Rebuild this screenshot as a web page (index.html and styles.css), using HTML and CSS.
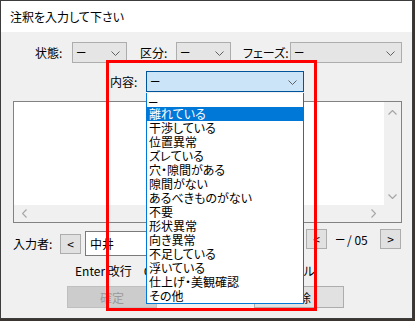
FILE: index.html
```html
<!DOCTYPE html>
<html lang="ja">

<head>
    <meta charset="UTF-8">
    <title>注釈を入力して下さい</title>
    <link rel="stylesheet" href="styles.css">
</head>

<body>
    <div class="window">
        <div class="titlebar">注釈を入力して下さい</div>

        <div class="filters">
            <span class="lbl lbl-state">状態:</span>
            <div class="combo combo-state"><span class="dash">–</span><svg class="chev" width="9" height="5" viewBox="0 0 9 5"><path d="M0.5 0.5 L4.5 4.5 L8.5 0.5" /></svg></div>
            <span class="lbl lbl-kind">区分:</span>
            <div class="combo combo-kind"><span class="dash">–</span><svg class="chev" width="9" height="5" viewBox="0 0 9 5"><path d="M0.5 0.5 L4.5 4.5 L8.5 0.5" /></svg></div>
            <span class="lbl lbl-phase">フェーズ:</span>
            <div class="combo combo-phase"><span class="dash">–</span><svg class="chev" width="9" height="5" viewBox="0 0 9 5"><path d="M0.5 0.5 L4.5 4.5 L8.5 0.5" /></svg></div>
        </div>

        <div class="content-row">
            <span class="lbl lbl-content">内容:</span>
            <div class="combo combo-content focused"><span class="dash">–</span><svg class="chev" width="9" height="5" viewBox="0 0 9 5"><path d="M0.5 0.5 L4.5 4.5 L8.5 0.5" /></svg></div>
        </div>

        <div class="memo">
            <div class="memo-text"></div>
            <div class="vscroll">
                <svg width="9" height="5" viewBox="0 0 9 5"><path d="M0.5 4.5 L4.5 0.5 L8.5 4.5" /></svg>
                <svg width="9" height="5" viewBox="0 0 9 5"><path d="M0.5 0.5 L4.5 4.5 L8.5 0.5" /></svg>
            </div>
            <div class="hscroll">
                <svg width="5" height="9" viewBox="0 0 5 9"><path d="M4.5 0.5 L0.5 4.5 L4.5 8.5" /></svg>
                <svg width="5" height="9" viewBox="0 0 5 9"><path d="M0.5 0.5 L4.5 4.5 L0.5 8.5" /></svg>
            </div>
            <div class="corner"></div>
        </div>

        <div class="author-row">
            <span class="lbl lbl-author">入力者:</span>
            <button class="small-btn">&lt;</button>
            <div class="author-field">中井</div>
            <div class="pager-group">
                <button class="small-btn">&lt;</button>
                <span class="pager"><span class="dash">–</span> / 05</span>
                <button class="small-btn">&gt;</button>
            </div>
        </div>

        <div class="hint">Enter 改行　Ctrl+Enter 確定　Esc キャンセル</div>

        <div class="actions">
            <button class="action-btn" disabled>確定</button>
            <button class="action-btn">削除</button>
        </div>

        <ul class="dropdown">
            <li><span class="dash">–</span></li>
            <li class="selected">離れている</li>
            <li>干渉している</li>
            <li>位置異常</li>
            <li>ズレている</li>
            <li>穴・隙間がある</li>
            <li>隙間がない</li>
            <li>あるべきものがない</li>
            <li>不要</li>
            <li>形状異常</li>
            <li>向き異常</li>
            <li>不足している</li>
            <li>浮いている</li>
            <li>仕上げ・美観確認</li>
            <li>その他</li>
        </ul>

        <div class="mark"></div>
    </div>
</body>

</html>
```

FILE: styles.css
```css
html {
    background-color: #3a3530;
}

body {
    margin: 0;
    font-family: "Noto Sans CJK JP", "Noto Sans", sans-serif;
    font-size: 12px;
    font-feature-settings: "palt";
    color: #000;
}

.window {
    position: relative;
    width: 411px;
    height: 317px;
    border: 1px solid #3c3c3c;
    background-color: #f0f0f0;
}

.titlebar {
    height: 31px;
    line-height: 31px;
    padding-left: 9px;
    background-color: #fff;
}

.lbl {
    line-height: 21px;
    white-space: nowrap;
}

.dash {
    font-family: "Liberation Sans", sans-serif;
    font-size: 15px;
    line-height: 1;
    vertical-align: 2px;
}

/* first row */
.filters {
    display: flex;
    margin-top: 10px;
    padding-left: 34px;
    height: 21px;
}

.lbl-state {
    width: 37px;
}

.lbl-kind {
    width: 36px;
    margin-left: 13px;
}

.lbl-phase {
    width: 47px;
    margin-left: 12px;
}

.combo {
    position: relative;
    box-sizing: border-box;
    height: 21px;
    line-height: 19px;
    padding-left: 4px;
    border: 1px solid #adadad;
    background-color: #e5e5e5;
}

.chev {
    position: absolute;
    right: 6px;
    top: 8px;
}

.chev path {
    fill: none;
    stroke: #606060;
    stroke-width: 1;
}

.combo-state {
    width: 55px;
}

.combo-kind {
    width: 55px;
}

.combo-phase {
    width: 112px;
}

.content-row {
    display: flex;
    margin-top: 8px;
    padding-left: 109px;
    height: 21px;
}

.lbl-content {
    width: 36px;
}

.combo-content {
    width: 158px;
}

.focused {
    border-color: #005499;
    background-color: #cce4f7;
}

/* memo box */
.memo {
    display: grid;
    grid-template-columns: 1fr 17px;
    grid-template-rows: 1fr 17px;
    box-sizing: border-box;
    width: 389px;
    height: 122px;
    margin: 9px 0 0 12px;
    border: 1px solid #828282;
    background-color: #fff;
}

.vscroll,
.hscroll,
.corner {
    background-color: #f0f0f0;
}

.vscroll {
    display: flex;
    flex-direction: column;
    justify-content: space-between;
    align-items: center;
    padding: 8px 0 6px;
}

.hscroll {
    display: flex;
    justify-content: space-between;
    align-items: center;
    padding: 0 8px;
}

.memo path {
    fill: none;
    stroke: #a6a6a6;
    stroke-width: 1.2;
}

/* author row */
.author-row {
    display: flex;
    align-items: center;
    height: 25px;
    margin-top: 8px;
    padding-left: 12px;
}

.lbl-author {
    width: 47px;
}

.small-btn {
    box-sizing: border-box;
    width: 21px;
    height: 20px;
    padding: 0;
    border: 1px solid #adadad;
    background-color: #e1e1e1;
    font: inherit;
    line-height: 16px;
    color: #000;
}

.author-field {
    box-sizing: border-box;
    width: 216px;
    height: 25px;
    margin: 0 5px 0 4px;
    padding-left: 4px;
    line-height: 23px;
    border: 1px solid #7a7a7a;
    background-color: #fff;
}

.pager-group {
    display: flex;
    align-items: center;
    align-self: flex-start;
    margin-top: -2px;
}

.pager {
    width: 35px;
    margin: 0 9px;
    white-space: nowrap;
}

.hint {
    margin-top: 7px;
    padding-left: 74px;
    line-height: 16px;
    white-space: pre;
}

.actions {
    display: flex;
    gap: 97px;
    margin-top: 7px;
    padding-left: 66px;
}

.action-btn {
    width: 90px;
    height: 22px;
    padding: 0;
    border: 1px solid #adadad;
    background-color: #e1e1e1;
    font: inherit;
    color: #000;
}

.action-btn:disabled {
    border-color: #bfbfbf;
    background-color: #cccccc;
    color: #9a9a9a;
}

/* open list of the 内容 combo */
.dropdown {
    position: absolute;
    left: 145px;
    top: 92px;
    box-sizing: border-box;
    width: 158px;
    margin: 0;
    padding: 0;
    list-style: none;
    border: 1px solid #0078d7;
    border-top: none;
    background-color: #fff;
}

.dropdown li {
    height: 14px;
    line-height: 14px;
    padding-left: 2px;
    white-space: nowrap;
}

.dropdown .selected {
    background-color: #0078d7;
    color: #fff;
}

/* red annotation frame */
.mark {
    position: absolute;
    left: 105px;
    top: 59px;
    box-sizing: border-box;
    width: 211px;
    height: 251px;
    border: 3px solid #ff0000;
}
```
